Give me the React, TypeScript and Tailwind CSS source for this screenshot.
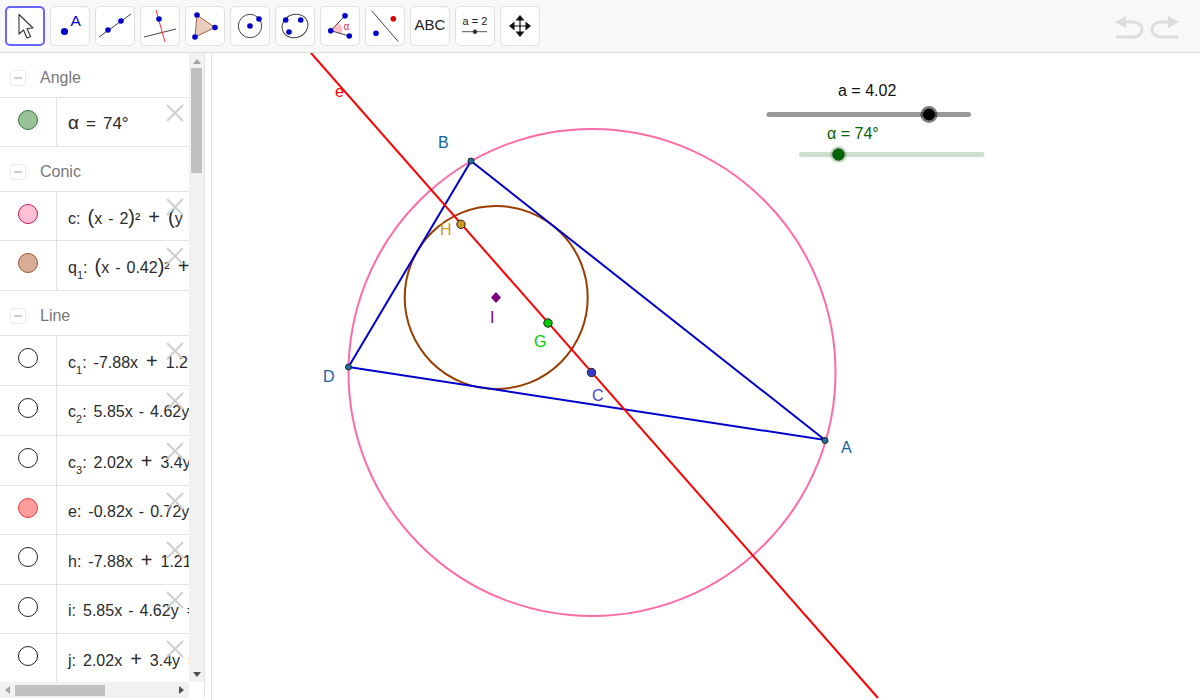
import React from "react";

const sans = "font-['Liberation_Sans',Arial,sans-serif]";
const B = "#0000cc";

function Tool({ active, children }: { active?: boolean; children: React.ReactNode }) {
  return (
    <div
      className={
        active
          ? "w-[40px] h-[40px] rounded-[5px] bg-white border-2 border-[#6666ff] shrink-0 overflow-hidden"
          : "w-[40px] h-[40px] rounded-[5px] bg-white border border-[#e0e0e0] shrink-0 overflow-hidden"
      }
    >
      {children}
    </div>
  );
}

function Ico({ children, inset }: { children: React.ReactNode; inset?: number }) {
  const o = inset ?? 1;
  return (
    <svg width="40" height="40" viewBox={`${o} ${o} 40 40`} className="block">
      {children}
    </svg>
  );
}

const Dot = ({ x, y, r = 2.8, c = B }: { x: number; y: number; r?: number; c?: string }) => (
  <circle cx={x} cy={y} r={r} fill={c} />
);

function Toolbar() {
  return (
    <div className="h-[53px] shrink-0 flex items-center gap-[5px] pl-[5px] pb-[1px] bg-[#f8f8f8] border-b border-[#dcdcdc]">
      <Tool active>
        <Ico inset={2}>
          <path d="M14 8.5 L14 28 L18.5 24 L22 32 L25.5 30.5 L22 22.5 L28 22 Z" fill="#fff" stroke="#333" strokeWidth="1.1" strokeLinejoin="round" />
        </Ico>
      </Tool>
      <Tool>
        <Ico>
          <Dot x={14.5} y={25.5} r={3.6} />
          <text x={20.5} y={19.5} fontSize="15.5" fill={B} fontFamily="'Liberation Sans',sans-serif">A</text>
        </Ico>
      </Tool>
      <Tool>
        <Ico>
          <line x1="4" y1="31" x2="36" y2="8" stroke="#444" strokeWidth="1" />
          <Dot x={13} y={24} />
          <Dot x={26} y={15} />
        </Ico>
      </Tool>
      <Tool>
        <Ico>
          <line x1="4" y1="31" x2="36" y2="23" stroke="#444" strokeWidth="1" />
          <line x1="16" y1="4" x2="25" y2="36" stroke="#ff3333" strokeWidth="1" />
          <Dot x={19} y={13} />
        </Ico>
      </Tool>
      <Tool>
        <Ico>
          <polygon points="12,9 30,21.5 10,31" fill="#e8cdbd" stroke="#a5603f" strokeWidth="1" />
          <Dot x={12} y={9} />
          <Dot x={30} y={21.5} />
          <Dot x={10} y={31} />
        </Ico>
      </Tool>
      <Tool>
        <Ico>
          <circle cx="20" cy="20" r="11.7" fill="none" stroke="#444" strokeWidth="1" />
          <Dot x={20} y={20} />
          <Dot x={29} y={13} />
        </Ico>
      </Tool>
      <Tool>
        <Ico>
          <ellipse cx="20" cy="20" rx="13.2" ry="11.5" transform="rotate(-25 20 20)" fill="none" stroke="#444" strokeWidth="1" />
          <Dot x={10.7} y={14} />
          <Dot x={25.7} y={14} />
          <Dot x={14} y={26} />
        </Ico>
      </Tool>
      <Tool>
        <Ico>
          <path d="M10.7 24.7 L18.6 16.4 A 11.5 11.5 0 0 1 21.7 27.8 Z" fill="#ffbcc8" />
          <line x1="10.7" y1="24.7" x2="25" y2="9.7" stroke="#444" strokeWidth="1" />
          <line x1="10.7" y1="24.7" x2="29.3" y2="30" stroke="#444" strokeWidth="1" />
          <Dot x={10.7} y={24.7} />
          <Dot x={25} y={9.7} />
          <Dot x={29.3} y={30} />
          <text x={23.5} y={23.5} fontSize="10" fill="#e03050" fontFamily="'Liberation Sans',sans-serif">α</text>
        </Ico>
      </Tool>
      <Tool>
        <Ico>
          <line x1="6.7" y1="4.7" x2="33.3" y2="35.7" stroke="#444" strokeWidth="1" />
          <Dot x={28.3} y={12.7} c="#dd0000" />
          <Dot x={11} y={27.3} />
        </Ico>
      </Tool>
      <Tool>
        <div className={`${sans} h-full flex items-center justify-center text-[15px] text-[#222]`}>ABC</div>
      </Tool>
      <Tool>
        <Ico>
          <text x={20} y={19} textAnchor="middle" fontSize="11" fill="#222" fontFamily="'Liberation Sans',sans-serif">a = 2</text>
          <line x1="7" y1="25.7" x2="32" y2="25.7" stroke="#555" strokeWidth="1" />
          <Dot x={20} y={25.7} r={2.2} c="#333" />
        </Ico>
      </Tool>
      <Tool>
        <Ico>
          <path d="M20 12 V28 M12 20 H28" stroke="#111" strokeWidth="1.2" />
          <path d="M20 9 L15.5 14.5 H24.5 Z M20 31 L15.5 25.5 H24.5 Z M9 20 L14.5 15.5 V24.5 Z M31 20 L25.5 15.5 V24.5 Z" fill="#111" />
        </Ico>
      </Tool>
      <div className="flex-1" />
      <svg width="68" height="26" viewBox="0 0 68 26" className="mr-[18px] mt-[2px]" fill="none">
        <path d="M1 8 L12 2 V14 Z" fill="#dddddd" />
        <path d="M11 8 H19 C31 8 31 23 19 23 H2" stroke="#dddddd" strokeWidth="3" />
        <path d="M65 8 L54 2 V14 Z" fill="#dddddd" />
        <path d="M55 8 H47 C35 8 35 23 47 23 H64" stroke="#dddddd" strokeWidth="3" />
      </svg>
    </div>
  );
}

function Eye({ fill, stroke }: { fill?: string; stroke?: string }) {
  return (
    <svg width="22" height="22" viewBox="0 0 22 22" className="block">
      <circle cx="11" cy="11" r="9.5" fill={fill ?? "#fff"} stroke={stroke ?? "#222"} strokeWidth="1" />
    </svg>
  );
}

function Head({ label, h }: { label: string; h: string }) {
  return (
    <div className={`${h} flex items-center border-b border-[#e2e2e2] pl-[10px] pt-[6px] gap-[14px]`}>
      <div className="w-[16px] h-[16px] rounded-[3px] border border-[#ececec] flex items-center justify-center">
        <div className="w-[8px] h-[2px] bg-[#cccccc]" />
      </div>
      <span className={`${sans} text-[16px] text-[#777777]`}>{label}</span>
    </div>
  );
}

function Row({ h, fill, stroke, big, children }: { h: string; fill?: string; stroke?: string; big?: boolean; children: React.ReactNode }) {
  return (
    <div className={`${h} relative flex border-b border-[#e2e2e2]`}>
      <div className="w-[57px] shrink-0 border-r border-[#e2e2e2] flex justify-center pt-[11px]">
        <Eye fill={fill} stroke={stroke} />
      </div>
      <div className={`${sans} flex-1 overflow-hidden whitespace-nowrap pl-[11px] ${big ? "text-[17px] pt-[15px]" : "text-[16px] pt-[15px]"} leading-[22px] text-[#2a2a2a]`}>
        {children}
      </div>
      <svg width="20" height="20" viewBox="0 0 20 20" className="absolute left-[165px] top-[5px]">
        <path d="M2 2 L18 18 M18 2 L2 18" stroke="#cfcfcf" strokeWidth="2" />
      </svg>
    </div>
  );
}

const S = ({ children }: { children: React.ReactNode }) => <sub className="text-[11px] leading-none align-[-3px]">{children}</sub>;
const Colon = () => <span className="mr-[7px]">:</span>;
const Plus = () => <span className="mx-[8px] text-[20px] leading-none">+</span>;
const Minus = () => <span className="mx-[6px]">-</span>;
const Eq = () => <span className="ml-[8px]">=</span>;
const Par = ({ children }: { children: React.ReactNode }) => <span className="text-[20px] leading-none">{children}</span>;

function VScroll() {
  return (
    <div className="w-[15px] shrink-0 h-full bg-[#f1f1f1] flex flex-col items-center relative">
      <div className="h-[15px] flex items-center justify-center pt-[2px]">
        <div className="w-0 h-0 border-l-[4px] border-r-[4px] border-b-[5px] border-l-transparent border-r-transparent border-b-[#a3a3a3]" />
      </div>
      <div className="w-[11px] h-[105px] bg-[#c1c1c1]" />
      <div className="flex-1" />
      <div className="h-[15px] flex items-center justify-center">
        <div className="w-0 h-0 border-l-[4px] border-r-[4px] border-t-[5px] border-l-transparent border-r-transparent border-t-[#505050]" />
      </div>
    </div>
  );
}

function HScroll() {
  return (
    <div className="h-[16px] flex shrink-0">
      <div className="w-[189px] bg-[#f1f1f1] flex items-center">
        <div className="w-[15px] flex justify-center">
          <div className="w-0 h-0 border-t-[4px] border-b-[4px] border-r-[5px] border-t-transparent border-b-transparent border-r-[#a3a3a3]" />
        </div>
        <div className="w-[90px] h-[11px] bg-[#c1c1c1]" />
        <div className="flex-1" />
        <div className="w-[15px] flex justify-center">
          <div className="w-0 h-0 border-t-[4px] border-b-[4px] border-l-[5px] border-t-transparent border-b-transparent border-l-[#505050]" />
        </div>
      </div>
      <div className="w-[15px] bg-white" />
    </div>
  );
}

function AlgebraPanel() {
  return (
    <div className="w-[212px] shrink-0 flex border-r border-[#e2e2e2]">
      <div className="w-[204px] shrink-0 h-[645px] flex flex-col border-r border-[#e2e2e2] box-content">
        <div className="flex flex-1 min-h-0">
          <div className="w-[189px] shrink-0 overflow-hidden">
            <Head label="Angle" h="h-[45px]" />
            <Row h="h-[49px]" big fill="#98c198" stroke="#2e7d32"><span className="text-[19px] leading-none">α</span><span className="mx-[7px]">=</span>74°</Row>
            <Head label="Conic" h="h-[45px]" />
            <Row h="h-[49px]" fill="#ffc0d3" stroke="#c2185b">c<Colon /><Par>(</Par>x<Minus />2<Par>)</Par>²<Plus /><Par>(</Par>y</Row>
            <Row h="h-[50px]" fill="#d7ad98" stroke="#a0522d">q<S>1</S><Colon /><Par>(</Par>x<Minus />0.42<Par>)</Par>²<Plus /></Row>
            <Head label="Line" h="h-[45px]" />
            <Row h="h-[50px]">c<S>1</S><Colon />-7.88x<Plus />1.2</Row>
            <Row h="h-[50px]">c<S>2</S><Colon />5.85x<Minus />4.62y</Row>
            <Row h="h-[50px]">c<S>3</S><Colon />2.02x<Plus />3.4y</Row>
            <Row h="h-[49px]" fill="#ff9c9c" stroke="#e53935">e<Colon />-0.82x<Minus />0.72y</Row>
            <Row h="h-[50px]">h<Colon />-7.88x<Plus />1.21</Row>
            <Row h="h-[49px]">i<Colon />5.85x<Minus />4.62y<Eq /></Row>
            <Row h="h-[49px]">j<Colon />2.02x<Plus />3.4y<Eq /></Row>
          </div>
          <VScroll />
        </div>
        <HScroll />
      </div>
    </div>
  );
}

function Canvas() {
  const font = "'Liberation Sans',sans-serif";
  const labels: [string, number, number, string][] = [
    ["A", 841, 453, "#1565a0"],
    ["B", 438, 148, "#1565a0"],
    ["D", 323, 382, "#1565a0"],
    ["C", 592, 401, "#4343d8"],
    ["G", 534, 347, "#00cc00"],
    ["H", 440, 235, "#cc9922"],
    ["I", 490, 323, "#7f007f"],
    ["e", 335, 97, "#ff0000"],
  ];
  return (
    <div className="flex-1 min-w-0 bg-white">
      <svg viewBox="212 53 988 647" width="988" height="647" className="block">
        <circle cx="592" cy="372.5" r="243.5" fill="none" stroke="#ff6ba6" strokeWidth="2" />
        <circle cx="496.2" cy="297.5" r="91.5" fill="none" stroke="#993d00" strokeWidth="2" />
        <polygon points="825,440 471,161 348.5,367" fill="none" stroke={B} strokeWidth="2" />
        <line x1="311" y1="53" x2="878" y2="698" stroke="#ff0000" strokeWidth="2" />
        <g stroke="#222" strokeWidth="1">
          <circle cx="825" cy="440.5" r="3" fill="#1f6f9f" />
          <circle cx="471" cy="161" r="3" fill="#1f6f9f" />
          <circle cx="348.5" cy="367" r="3" fill="#1f6f9f" />
          <circle cx="461" cy="224.3" r="4.2" fill="#cc9922" />
          <circle cx="548" cy="323" r="4.2" fill="#00cc00" />
          <circle cx="591.5" cy="372.5" r="4.2" fill="#3a3ac8" />
        </g>
        <polygon points="496,292 501,297.5 496,303 491,297.5" fill="#7f007f" />
        {labels.map(([t, x, y, c]) => (
          <text key={t} x={x} y={y} fontSize="16" fill={c} fontFamily={font}>{t}</text>
        ))}
        <text x="838" y="96" fontSize="16" fill="#111" fontFamily={font}>a = 4.02</text>
        <line x1="769" y1="114.5" x2="968.5" y2="114.5" stroke="#999" strokeWidth="5" strokeLinecap="round" />
        <circle cx="929" cy="114.5" r="8.5" fill="#000" fillOpacity="0.5" />
        <circle cx="929" cy="114.5" r="6" fill="#000" />
        <text x="827" y="139" fontSize="16" fill="#006400" fontFamily={font}>α = 74°</text>
        <line x1="801.5" y1="154.5" x2="982" y2="154.5" stroke="#cde0cd" strokeWidth="5" strokeLinecap="round" />
        <circle cx="838.5" cy="154.5" r="8.5" fill="#006400" fillOpacity="0.22" />
        <circle cx="838.5" cy="154.5" r="6" fill="#006400" stroke="#333" strokeWidth="0.5" />
      </svg>
    </div>
  );
}

export default function App() {
  return (
    <div className="w-[1200px] h-[700px] overflow-hidden flex flex-col bg-white">
      <Toolbar />
      <div className="flex flex-1 min-h-0">
        <AlgebraPanel />
        <Canvas />
      </div>
    </div>
  );
}
